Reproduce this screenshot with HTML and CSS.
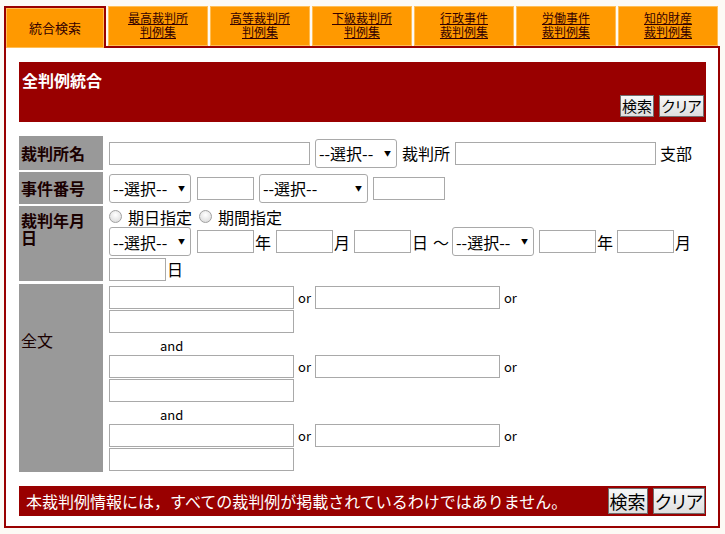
FILE: index.html
```html
<!DOCTYPE html>
<html lang="ja">
<head>
    <meta charset="UTF-8">
    <title>裁判例検索</title>
    <link rel="stylesheet" href="styles.css">
</head>
<body>
    <div class="tabs">
        <a class="tab active">統合検索</a>
        <a class="tab">最高裁判所<br>判例集</a>
        <a class="tab">高等裁判所<br>判例集</a>
        <a class="tab">下級裁判所<br>判例集</a>
        <a class="tab">行政事件<br>裁判例集</a>
        <a class="tab">労働事件<br>裁判例集</a>
        <a class="tab">知的財産<br>裁判例集</a>
    </div>

    <div class="panel">
        <div class="banner">
            <h1>全判例統合</h1>
            <div class="buttons">
                <button class="btn">検索</button>
                <button class="btn clear">クリア</button>
            </div>
        </div>

        <div class="form">
            <div class="label row1">裁判所名</div>
            <div class="field row1">
                <input type="text" class="w201">
                <span class="sel w82"><select><option>--選択--</option></select></span>
                <span>裁判所</span>
                <input type="text" class="w201">
                <span class="tight">支部</span>
            </div>

            <div class="label row2">事件番号</div>
            <div class="field row2">
                <span class="sel w82"><select><option>--選択--</option></select></span>
                <input type="text" class="w57 gap6">
                <span class="sel w109"><select><option>--選択--</option></select></span>
                <input type="text" class="w72">
            </div>

            <div class="label row3">裁判年月日</div>
            <div class="field-stack row3">
                <div class="line radios">
                    <input type="radio" name="date"><span>期日指定</span>
                    <input type="radio" name="date"><span>期間指定</span>
                </div>
                <div class="line">
                    <span class="sel w82"><select><option>--選択--</option></select></span>
                    <input type="text" class="w57 gap6"><span class="unit">年</span>
                    <input type="text" class="w57"><span class="unit">月</span>
                    <input type="text" class="w57 gap3"><span class="unit">日</span>
                    <span class="tilde">～</span>
                    <span class="sel w82"><select><option>--選択--</option></select></span>
                    <input type="text" class="w57"><span class="unit">年</span>
                    <input type="text" class="w57 gap3"><span class="unit">月</span>
                </div>
                <div class="line last">
                    <input type="text" class="w57"><span class="unit">日</span>
                </div>
            </div>

            <div class="label row4">全文</div>
            <div class="field-stack row4">
                <div class="words">
                    <div class="line"><input type="text" class="w185"><span class="or">or</span><input type="text" class="w185"><span class="or">or</span></div>
                    <input type="text" class="w185">
                </div>
                <div class="and">and</div>
                <div class="words">
                    <div class="line"><input type="text" class="w185"><span class="or">or</span><input type="text" class="w185"><span class="or">or</span></div>
                    <input type="text" class="w185">
                </div>
                <div class="and">and</div>
                <div class="words">
                    <div class="line"><input type="text" class="w185"><span class="or">or</span><input type="text" class="w185"><span class="or">or</span></div>
                    <input type="text" class="w185">
                </div>
            </div>
        </div>

        <div class="footer">
            <span>本裁判例情報には，すべての裁判例が掲載されているわけではありません。</span>
            <div class="buttons">
                <button class="btn big">検索</button>
                <button class="btn big clear">クリア</button>
            </div>
        </div>
    </div>
</body>
</html>
```

FILE: styles.css
```css
:root {
    --dark-red: #990000;
    --orange: #ff9900;
    --label-grey: #999999;
    --field-border: #a9a9a9;
}

body {
    margin: 0;
    padding: 6px 5px 6px 4px;
    background: #fcfaf5;
    font-family: "Noto Sans CJK JP", "Noto Sans", sans-serif;
    color: #000;
}

.tabs {
    display: flex;
    gap: 2px;
    width: 714px;
}

.tab {
    flex: 1;
    height: 40px;
    box-sizing: border-box;
    border: 1px solid #ffbe55;
    background: var(--orange);
    display: flex;
    align-items: center;
    justify-content: center;
    text-align: center;
    font-family: "Liberation Sans", "Noto Sans CJK JP", sans-serif;
    font-size: 12px;
    line-height: 14px;
    color: #330000;
    text-decoration: underline;
}

.tab.active {
    height: 42px;
    margin-bottom: -2px;
    border: 2px solid var(--dark-red);
    border-bottom: none;
    box-shadow: inset 0 0 0 1px #ffbe55;
    position: relative;
    z-index: 1;
    text-decoration: none;
    font-size: 13px;
    padding-top: 2px;
}

.panel {
    width: 716px;
    height: 482px;
    box-sizing: border-box;
    border: 2px solid var(--dark-red);
    background: #fff;
    padding: 14px 12px 10px 13px;
}

.banner {
    height: 60px;
    box-sizing: border-box;
    background: var(--dark-red);
    display: flex;
    flex-direction: column;
    justify-content: space-between;
    padding: 8px 2px 5px 3px;
}

.banner h1 {
    margin: 0;
    color: #fff;
    font-size: 16px;
    line-height: 20px;
    font-weight: bold;
}

.buttons {
    display: flex;
    justify-content: flex-end;
    gap: 5px;
}

.btn {
    height: 22px;
    padding: 0 1px;
    border: 1px solid #707070;
    border-radius: 0;
    background: linear-gradient(#f8f8f8, #dedede);
    font-family: inherit;
    font-size: 15px;
    line-height: 18px;
    color: #000;
}

.btn.clear {
    letter-spacing: -2px;
    padding: 0 3px 0 1px;
}

.btn.big {
    height: 26px;
    font-size: 18px;
    line-height: 22px;
}

.btn.big.clear {
    letter-spacing: -2.5px;
}

.form {
    margin-top: 14px;
    display: grid;
    grid-template-columns: 84px 1fr;
    column-gap: 6px;
    row-gap: 2px;
}

.label {
    background: var(--label-grey);
    font-size: 16px;
    font-weight: bold;
    line-height: 17px;
    color: #1a0000;
    padding: 0 6px 0 2px;
    display: flex;
    align-items: center;
}

.label.row1 { height: 34px; }
.label.row2 { height: 32px; }

.label.row3 {
    height: 75px;
    align-items: flex-start;
    padding-top: 6px;
    box-sizing: border-box;
}

.label.row4 {
    margin-top: 1px;
    height: 188px;
    align-items: flex-start;
    padding-top: 48px;
    box-sizing: border-box;
    font-weight: normal;
}

.field {
    display: flex;
    align-items: center;
    gap: 5px;
    font-size: 16px;
}

.field-stack {
    display: flex;
    flex-direction: column;
    font-size: 16px;
}

.field-stack.row3 {
    height: 75px;
}

.field-stack.row4 {
    margin-top: 1px;
    padding-top: 2px;
}

.line {
    display: flex;
    align-items: center;
    gap: 5px;
}

.radios {
    height: 21px;
    gap: 0;
}

.radios span {
    margin: 0 7px 0 6px;
}

.line.last {
    margin-top: 1px;
}

input[type="text"] {
    height: 23px;
    box-sizing: border-box;
    margin: 0;
    border: 1px solid var(--field-border);
    padding: 1px 2px;
    font-family: inherit;
    font-size: 15px;
}

input[type="radio"] {
    appearance: none;
    width: 13px;
    height: 13px;
    margin: 0;
    border: 1px solid #a0a0a0;
    border-radius: 50%;
    background: radial-gradient(circle at 50% 35%, #ffffff, #d6d6d6);
}

.sel {
    position: relative;
    display: inline-block;
    height: 29px;
}

.sel select {
    appearance: none;
    width: 100%;
    height: 29px;
    box-sizing: border-box;
    margin: 0;
    border: 1px solid var(--field-border);
    border-radius: 3px;
    background: #fff;
    padding: 0 0 0 3px;
    font-family: inherit;
    font-size: 16px;
    color: #000;
}

.sel::after {
    content: "▼";
    position: absolute;
    right: 6px;
    top: 9px;
    font-size: 7px;
    line-height: 10px;
    pointer-events: none;
}

.w57 { width: 57px; }
.w72 { width: 72px; }
.w82 { width: 82px; }
.w109 { width: 109px; }
.w185 { width: 185px; }
.w201 { width: 201px; }

.gap6 { margin-left: 1px !important; }
.gap3 { margin-left: -1px !important; }

.unit {
    margin-left: -4px;
}

.tilde {
    margin-right: -2px;
}

.tight {
    margin-left: -1px;
}

.words {
    display: flex;
    flex-direction: column;
    gap: 1px;
}

.words .line {
    gap: 4px;
}

.or {
    font-size: 13px;
    line-height: 16px;
}

.and {
    height: 22px;
    font-size: 13px;
    line-height: 26px;
    padding-left: 51px;
}

.footer {
    margin-top: 14px;
    height: 30px;
    background: var(--dark-red);
    color: #fff;
    font-size: 16px;
    display: flex;
    align-items: center;
    justify-content: space-between;
    padding: 0 1px 0 7px;
}
```
